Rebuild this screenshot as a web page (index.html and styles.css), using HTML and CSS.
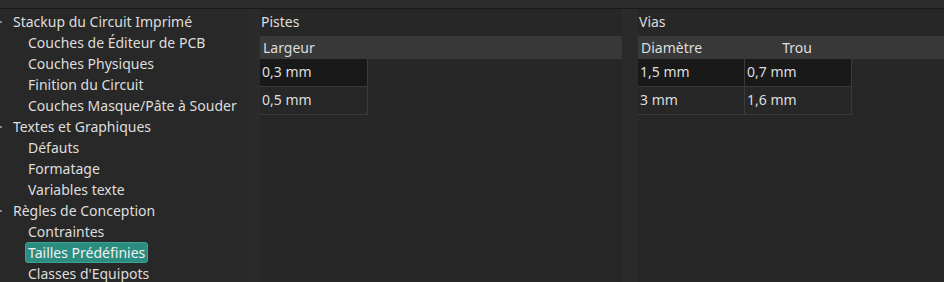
FILE: index.html
```html
<!DOCTYPE html>
<html lang="fr">
<head>
  <meta charset="UTF-8" />
  <meta name="viewport" content="width=device-width, initial-scale=1.0"/>
  <title>Tailles Prédéfinies</title>
  <link rel="stylesheet" href="styles.css">
</head>
<body>

  <div class="topbar"></div>

  <div class="main">
    <ul class="tree">
      <li class="parent">Stackup du Circuit Imprimé</li>
      <li class="child">Couches de Éditeur de PCB</li>
      <li class="child">Couches Physiques</li>
      <li class="child">Finition du Circuit</li>
      <li class="child">Couches Masque/Pâte à Souder</li>
      <li class="parent">Textes et Graphiques</li>
      <li class="child">Défauts</li>
      <li class="child">Formatage</li>
      <li class="child">Variables texte</li>
      <li class="parent">Règles de Conception</li>
      <li class="child">Contraintes</li>
      <li class="child"><span class="selected">Tailles Prédéfinies</span></li>
      <li class="child">Classes d'Equipots</li>
    </ul>

    <div class="splitter"></div>

    <div class="content">
      <div class="group pistes">
        <div class="group-title">Pistes</div>
        <div class="grid">
          <div class="header">
            <div class="hcell">Largeur</div>
          </div>
          <div class="row">
            <div class="cell w1 current">0,3 mm</div>
          </div>
          <div class="row">
            <div class="cell w1">0,5 mm</div>
          </div>
        </div>
      </div>

      <div class="gap"></div>

      <div class="group vias">
        <div class="group-title">Vias</div>
        <div class="grid">
          <div class="header">
            <div class="hcell w2">Diamètre</div>
            <div class="hcell w2 center">Trou</div>
          </div>
          <div class="row">
            <div class="cell w2 current">1,5 mm</div>
            <div class="cell w2 current">0,7 mm</div>
          </div>
          <div class="row">
            <div class="cell w2">3 mm</div>
            <div class="cell w2">1,6 mm</div>
          </div>
        </div>
      </div>
    </div>
  </div>

</body>
</html>
```

FILE: styles.css
```css
body {
  margin: 0;
  font-family: "Noto Sans", sans-serif;
  font-size: 14px;
  color: #dedede;
  background: #272727;
  height: 282px;
  overflow: hidden;
}
.topbar {
  height: 8px;
  background: #2c2c2c;
  border-bottom: 1px solid #1a1a1a;
}
.main {
  display: flex;
  height: 273px;
}
.tree {
  list-style: none;
  margin: 0;
  padding: 2px 0 0;
  width: 249px;
  background: #282828;
}
.tree li {
  height: 21px;
  line-height: 21px;
  white-space: nowrap;
  position: relative;
}
.tree .parent {
  padding-left: 13px;
}
.tree .parent::before {
  content: "";
  position: absolute;
  left: 0;
  top: 10px;
  width: 2px;
  height: 2px;
  background: #8a8a8a;
}
.tree .child {
  padding-left: 28px;
}
.selected {
  display: inline-block;
  margin-left: -3px;
  padding: 0 2px;
  height: 19px;
  line-height: 19px;
  background: #2b8c80;
  border: 1px solid #3aa597;
  border-radius: 3px;
  color: #f0f0f0;
}
.splitter {
  width: 11px;
  background: #2b2b2b;
}
.content {
  flex: 1;
  display: flex;
}
.group {
  display: flex;
  flex-direction: column;
}
.pistes {
  width: 362px;
}
.vias {
  flex: 1;
}
.gap {
  width: 16px;
  background: #2a2a2a;
}
.group-title {
  height: 27px;
  line-height: 25px;
  padding-left: 1px;
  background: #272727;
}
.header {
  display: flex;
  height: 23px;
  line-height: 23px;
  background: #393939;
}
.hcell {
  padding-left: 3px;
}
.hcell.w2 {
  width: 104px;
}
.hcell.center {
  text-align: center;
  padding-left: 0;
}
.row {
  display: flex;
}
.cell {
  height: 28px;
  line-height: 26px;
  padding-left: 2px;
  border-right: 1px solid #3a3a3a;
  border-bottom: 1px solid #3a3a3a;
  box-sizing: border-box;
}
.cell.w1 {
  width: 108px;
}
.cell.w2 {
  width: 107px;
}
.cell.current {
  background: #191919;
}
```
